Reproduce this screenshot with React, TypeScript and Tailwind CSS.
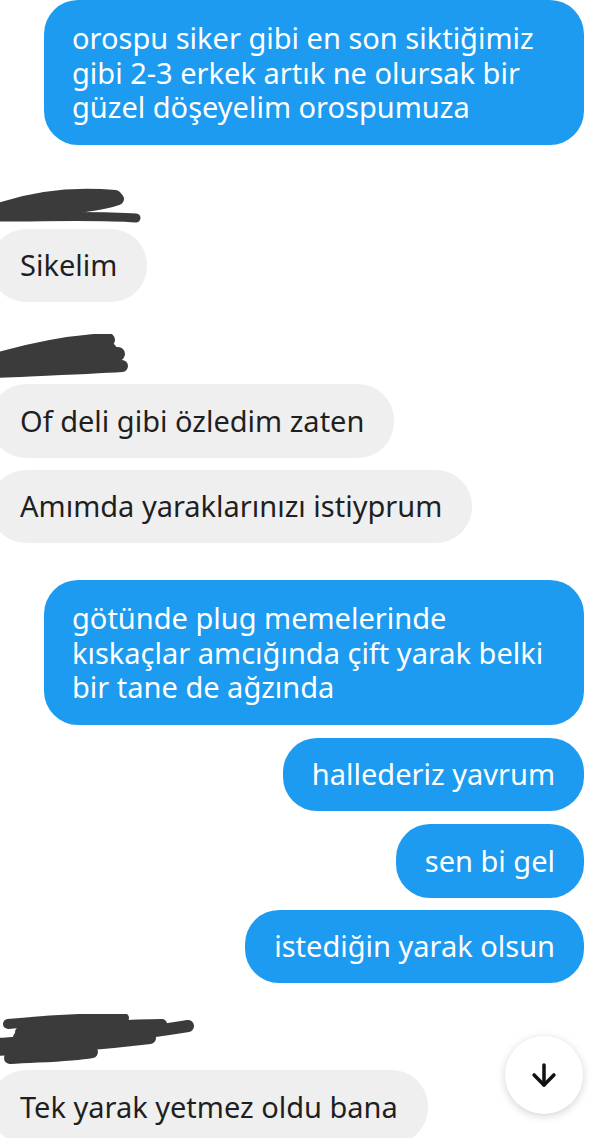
import { ArrowDown } from "lucide-react";

const font = { fontFamily: "'Noto Sans', 'Open Sans', sans-serif" };

function Sent({ lines, wide }: { lines: string[]; wide?: boolean }) {
  return (
    <div className="flex justify-end pr-[32px]">
      <div
        className={`bg-[#1d9bf0] text-white text-[29px] leading-[34.5px] rounded-[34px] whitespace-nowrap ${
          wide ? "w-[540px] pl-[28px] pt-[21px] pb-[20px]" : "px-[29px] py-[19.5px]"
        }`}
      >
        {lines.map((l, i) => (
          <div key={i}>{l}</div>
        ))}
      </div>
    </div>
  );
}

function Received({ children }: { children: React.ReactNode }) {
  return (
    <div className="flex">
      <div className="-ml-[10px] bg-[#efefef] text-[#1f1f1f] text-[29px] leading-[34.5px] rounded-[36px] pl-[30px] pr-[30px] py-[19.5px] whitespace-nowrap">
        {children}
      </div>
    </div>
  );
}

function Scribble({ variant }: { variant: 1 | 2 | 3 }) {
  if (variant === 1)
    return (
      <svg width="150" height="40" className="block" fill="none" stroke="#3b3b3b" strokeLinecap="round" strokeLinejoin="round">
        <path d="M-4 24 C 30 12, 70 6, 115 10" strokeWidth="14" />
        <path d="M-4 28 C 40 22, 90 22, 118 12" strokeWidth="12" />
        <path d="M-4 30 C 50 30, 100 28, 136 31" strokeWidth="9" />
      </svg>
    );
  if (variant === 2)
    return (
      <svg width="140" height="46" className="block" fill="none" stroke="#3b3b3b" strokeLinecap="round" strokeLinejoin="round">
        <path d="M-4 26 C 30 16, 70 8, 108 6" strokeWidth="14" />
        <path d="M-4 34 C 40 28, 80 22, 118 20" strokeWidth="14" />
        <path d="M-4 38 C 40 36, 90 34, 122 32" strokeWidth="12" />
        <path d="M20 30 L 110 16" strokeWidth="14" />
      </svg>
    );
  return (
    <svg width="200" height="52" className="block" fill="none" stroke="#3b3b3b" strokeLinecap="round" strokeLinejoin="round">
      <path d="M8 10 C 50 6, 90 4, 124 4" strokeWidth="10" />
      <path d="M20 18 C 70 14, 120 10, 162 10" strokeWidth="10" />
      <path d="M-4 30 C 60 26, 130 22, 188 12" strokeWidth="12" />
      <path d="M-4 36 C 50 34, 100 30, 150 24" strokeWidth="12" />
      <path d="M10 44 C 40 42, 70 42, 92 38" strokeWidth="12" />
      <path d="M20 24 L 120 18" strokeWidth="14" />
    </svg>
  );
}

export default function App() {
  return (
    <div className="relative h-[1138px] w-[616px] overflow-hidden bg-white" style={font}>
      <div className="flex flex-col">
        <Sent
          wide
          lines={["orospu siker gibi en son siktiğimiz", "gibi 2-3 erkek artık ne olursak bir", "güzel döşeyelim orospumuza"]}
        />

        <div className="mt-[42px]">
          <Scribble variant={1} />
        </div>
        <div className="mt-[2px]">
          <Received>Sikelim</Received>
        </div>

        <div className="mt-[32px]">
          <Scribble variant={2} />
        </div>
        <div className="mt-[4px]">
          <Received>Of deli gibi özledim zaten</Received>
        </div>
        <div className="mt-[12px]">
          <Received>Amımda yaraklarınızı istiyprum</Received>
        </div>

        <div className="mt-[37px]">
          <Sent
            wide
            lines={["götünde plug memelerinde", "kıskaçlar amcığında çift yarak belki", "bir tane de ağzında"]}
          />
        </div>
        <div className="mt-[13px]">
          <Sent lines={["hallederiz yavrum"]} />
        </div>
        <div className="mt-[13px]">
          <Sent lines={["sen bi gel"]} />
        </div>
        <div className="mt-[12px]">
          <Sent lines={["istediğin yarak olsun"]} />
        </div>

        <div className="mt-[31px]">
          <Scribble variant={3} />
        </div>
        <div className="mt-[4px]">
          <Received>Tek yarak yetmez oldu bana</Received>
        </div>
      </div>

      <button className="absolute left-[505px] top-[1036px] flex h-[78px] w-[78px] items-center justify-center rounded-full bg-white shadow-[0_2px_8px_rgba(0,0,0,0.18)]">
        <ArrowDown className="h-[34px] w-[34px] text-[#111]" strokeWidth={2.5} />
      </button>
    </div>
  );
}
